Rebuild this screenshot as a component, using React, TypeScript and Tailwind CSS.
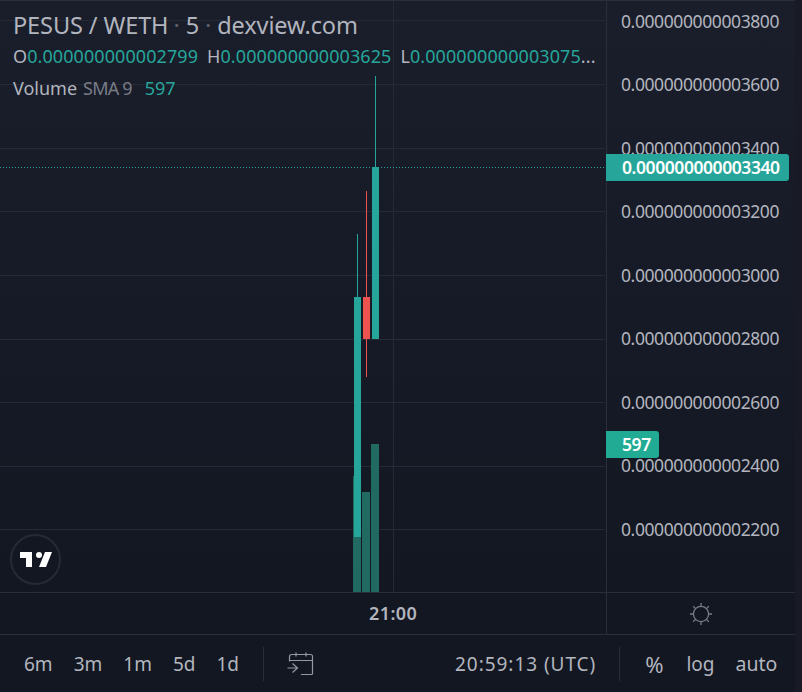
const prices = ["3800", "3600", "3400", "3200", "3000", "2800", "2600", "2400", "2200"];
const gridY = [20.5, 84.5, 148.5, 211.5, 275.5, 339.5, 402.5, 466.5, 529.5];
const ranges = ["6m", "3m", "1m", "5d", "1d"];

function Chart() {
  return (
    <svg width="605" height="591" viewBox="0 1 605 591" className="block">
      {gridY.map((y) => (
        <line key={y} x1="0" x2="605" y1={y} y2={y} stroke="#262a36" />
      ))}
      <line x1="393.5" x2="393.5" y1="0" y2="592" stroke="#262a36" />
      <line x1="0" x2="605" y1="167.5" y2="167.5" stroke="#26a69a" strokeDasharray="1 2" />
      {/* volume */}
      <rect x="353" y="476" width="8" height="116" fill="#216a62" />
      <rect x="362" y="492" width="8" height="100" fill="#216a62" />
      <rect x="371" y="444" width="8" height="148" fill="#216a62" />
      {/* candles */}
      <line x1="357.5" x2="357.5" y1="234" y2="297" stroke="#26a69a" />
      <rect x="354" y="297" width="7" height="240" fill="#26a69a" />
      <line x1="366.5" x2="366.5" y1="191" y2="377" stroke="#ef5350" />
      <rect x="363" y="297" width="7" height="42" fill="#ef5350" />
      <line x1="375.5" x2="375.5" y1="76" y2="167" stroke="#26a69a" />
      <rect x="372" y="167" width="7" height="172" fill="#26a69a" />
    </svg>
  );
}

function TvLogo() {
  return (
    <div className="absolute left-[10px] top-[533px] flex h-[51px] w-[51px] items-center justify-center rounded-full border-2 border-[#262a35] bg-[#131722]">
      <svg width="36" height="28" viewBox="0 0 36 28" fill="#fff">
        <path d="M14 6H2v6h6v9h6V6zm14 15h-7l6-15h7l-6 15zm-7-9a3 3 0 1 0 0-6 3 3 0 0 0 0 6z" />
      </svg>
    </div>
  );
}

function Legend() {
  return (
    <div className="absolute left-[13px] top-[10px] w-[590px] font-['Noto_Sans',sans-serif] text-[#b2b5be]">
      <div className="flex h-[29px] items-center text-[23.5px] tracking-[-0.1px] whitespace-nowrap">
        <span>PESUS / WETH</span>
        <span className="ml-[5px] mr-[6px] text-[#5d606b]">·</span>
        <span>5</span>
        <span className="mx-[6px] text-[#5d606b]">·</span>
        <span>dexview.com</span>
      </div>
      <div className="mt-[4px] flex h-[24px] items-center text-[18px] tracking-[0.08px] whitespace-nowrap">
        <span>O</span><span className="text-[#26a69a]">0.000000000002799</span>
        <span className="ml-[9px]">H</span><span className="text-[#26a69a]">0.000000000003625</span>
        <span className="ml-[9px]">L</span><span className="text-[#26a69a]">0.000000000003075</span>
        <span>...</span>
      </div>
      <div className="mt-[8px] flex h-[24px] items-center text-[18px] whitespace-nowrap">
        <span>Volume</span>
        <span className="ml-[6px] tracking-[-0.8px] text-[#787b86]">SMA 9</span>
        <span className="ml-[13px] text-[#26a69a]">597</span>
      </div>
    </div>
  );
}

function PriceAxis() {
  return (
    <div className="relative w-[189px] border-l border-[#2a2e39] font-['Noto_Sans',sans-serif] text-[17.5px] tracking-[-0.4px] text-[#b2b5be]">
      <div className="flex flex-col pt-[4.5px] pl-[14px]">
        {prices.map((p) => (
          <div key={p} className="flex h-[63.5px] items-start leading-[30px]">0.00000000000{p}</div>
        ))}
      </div>
      <div className="absolute left-[-1px] top-[153px] flex h-[27px] w-[183px] items-center rounded-r-[3px] bg-[#26a69a] pl-[16px] font-semibold tracking-[-0.43px] text-white">
        0.000000000003340
      </div>
      <div className="absolute left-[-1px] top-[430px] flex h-[27px] w-[53px] items-center rounded-r-[3px] bg-[#22ab94] pl-[16px] font-semibold text-white">
        597
      </div>
    </div>
  );
}

function GoToIcon() {
  return (
    <svg width="27" height="24" viewBox="0 0 27 24" fill="none" stroke="#9598a1" strokeWidth="1.2">
      <path d="M2.5 9.5V4.5a2 2 0 0 1 2-2h19a2 2 0 0 1 2 2v17a1 1 0 0 1-1 1H14" />
      <path d="M2.5 8.5h23M9 .5v4M19 .5v4" />
      <path d="M.5 16h10M5.5 11.5l5 4.5-5 4.5" />
    </svg>
  );
}

function SunIcon() {
  return (
    <svg width="24" height="24" viewBox="0 0 24 24" fill="none" stroke="#787b86" strokeWidth="1.3">
      <circle cx="12" cy="12" r="7.6" />
      <path d="M12 1v3.4M12 19.6V23M1 12h3.4M19.6 12H23M4.2 4.2l2.4 2.4M17.4 17.4l2.4 2.4M4.2 19.8l2.4-2.4M17.4 6.6l2.4-2.4" />
    </svg>
  );
}

export default function App() {
  return (
    <div className="flex h-[692px] w-[802px] overflow-hidden bg-[#181b26]">
      <div className="flex h-full w-[795px] flex-col bg-[#131722]">
        <div className="flex h-[593px] border-t border-b border-[#2a2e39] bg-gradient-to-b from-[#1a1e2b] to-[#131722]">
          <div className="relative w-[606px]">
            <Chart />
            <Legend />
            <TvLogo />
          </div>
          <PriceAxis />
        </div>
        <div className="flex h-[42px] border-b border-[#2a2e39] font-['Noto_Sans',sans-serif]">
          <div className="flex w-[606px] items-center">
            <span className="ml-[369px] text-[18px] font-semibold tracking-[0.4px] text-[#b2b5be]">21:00</span>
          </div>
          <div className="flex w-[189px] items-center justify-center border-l border-[#2a2e39] pr-[1px]">
            <SunIcon />
          </div>
        </div>
        <div className="flex flex-1 items-center pl-[24px] pt-[1px] font-['Noto_Sans',sans-serif] text-[19px] text-[#b2b5be]">
          <div className="flex gap-[21px]">
            {ranges.map((r) => (
              <span key={r}>{r}</span>
            ))}
          </div>
          <div className="ml-[24px] h-[34px] w-px bg-[#2a2e39]" />
          <div className="ml-[23px] -mt-[1px] flex"><GoToIcon /></div>
          <span className="ml-[141px] tracking-[0.95px] whitespace-nowrap">20:59:13 (UTC)</span>
          <div className="ml-[23px] h-[34px] w-px bg-[#2a2e39]" />
          <span className="ml-[25px] text-[22px]">%</span>
          <span className="ml-[23px]">log</span>
          <span className="ml-[21px] text-[19.5px]">auto</span>
        </div>
      </div>
    </div>
  );
}
